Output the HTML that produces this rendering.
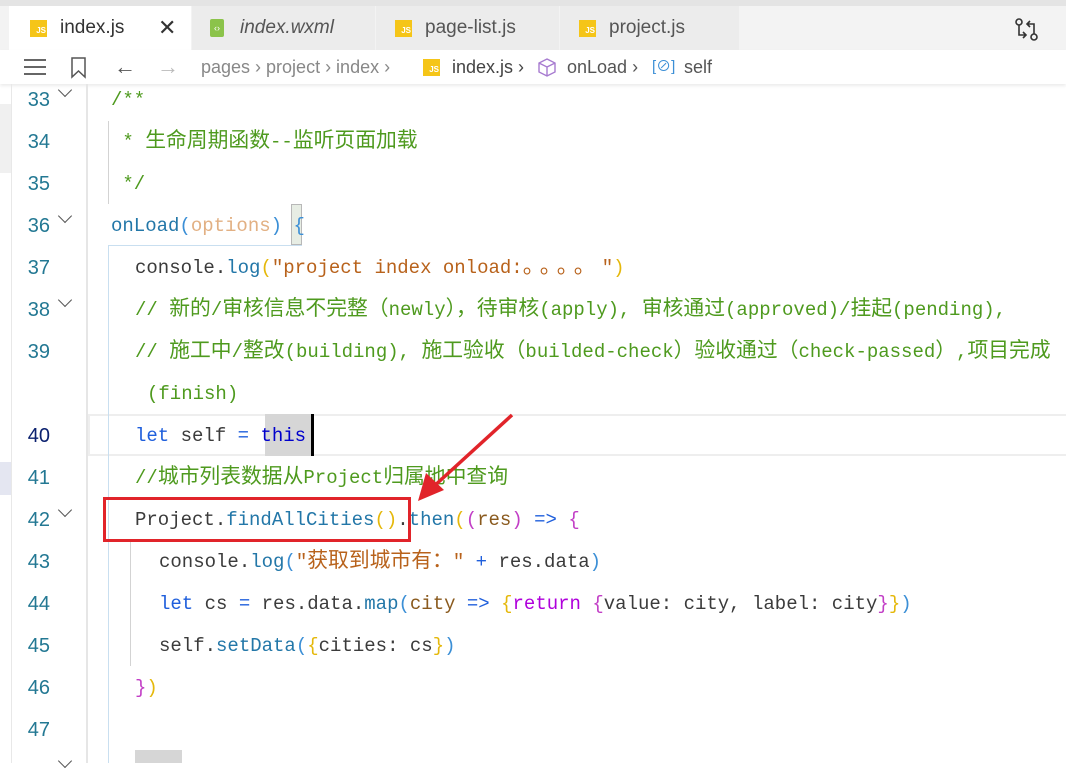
<!DOCTYPE html>
<html><head><meta charset="utf-8"><style>
*{margin:0;padding:0;box-sizing:border-box}
body{width:1066px;height:763px;overflow:hidden;background:#fff;position:relative;font-family:"Liberation Sans","Noto Sans CJK SC",sans-serif}
.abs{position:absolute}
.tab{position:absolute;top:6px;height:44px;background:#ececec;border-right:1px solid #f3f3f3;font-size:19px;color:#555;line-height:44px}
.js{position:absolute;width:17px;height:17px;background:#f5c518;color:#fff;font-size:8px;font-weight:bold;line-height:22px;text-align:right;padding-right:1px;top:14px}
.code{position:absolute;left:0;width:1066px;height:42px;line-height:42px;font-family:"Liberation Mono","Noto Sans CJK SC",monospace;font-size:19px;white-space:pre;color:#3b3b3b}
.ln{position:absolute;left:12px;width:38px;text-align:right;color:#237893;font-family:"Liberation Sans",sans-serif;font-size:20px}
.tx{position:absolute;left:111px;line-height:42px}
.l1{left:135px}.l2{left:159px}
.z{font-family:"Noto Sans CJK SC",sans-serif;font-size:20.8px;font-weight:normal;line-height:0}
.chev{position:absolute;left:60px;width:10px;height:10px;border-right:1.5px solid #555;border-bottom:1.5px solid #555;transform:rotate(45deg)}
.c{color:#4e9a1e}.s{color:#b8621b}.k{color:#1f5fdc}.f{color:#2377a8}.p{color:#e2b083}.v{color:#8a5a1e}
.b1{color:#e5b80b}.b2{color:#c23ec6}.b3{color:#3b8fd6}.op{color:#1f5fdc}
</style></head><body>
<div class="abs" style="left:0;top:0;width:1066px;height:50px;background:#f3f3f3"></div>
<div class="abs" style="left:0;top:0;width:1066px;height:6px;background:#e4e4e4"></div>
<div class="tab" style="left:9px;width:183px;background:#fff;color:#333"><span class="js" style="left:21px">JS</span><span style="position:absolute;left:51px">index.js</span><span style="position:absolute;left:149px;font-size:22px;color:#333">✕</span></div>
<div class="tab" style="left:192px;width:184px"><span class="abs" style="left:18px;top:13px;width:14px;height:18px;background:#8bc34a;border-radius:2px;color:#fff;font-size:9px;line-height:18px;text-align:center">‹›</span><span style="position:absolute;left:48px;font-style:italic">index.wxml</span></div>
<div class="tab" style="left:376px;width:184px"><span class="js" style="left:19px">JS</span><span style="position:absolute;left:49px">page-list.js</span></div>
<div class="tab" style="left:560px;width:180px"><span class="js" style="left:19px">JS</span><span style="position:absolute;left:49px">project.js</span></div>
<svg class="abs" style="left:1014px;top:17px" width="26" height="26" viewBox="0 0 26 26" fill="none" stroke="#333" stroke-width="1.6"><circle cx="5" cy="5" r="3"/><circle cx="20" cy="20" r="3"/><path d="M5 8v10h6M9 15l3 3-3 3M20 17V7h-6M16 4l-3 3 3 3"/></svg>
<div class="abs" style="left:0;top:50px;width:1066px;height:34px;background:#fff;box-shadow:0 2px 3px rgba(0,0,0,.08)"></div>
<div class="abs" style="left:0;top:50px;height:34px;line-height:34px;font-size:18px;color:#888;width:1066px">
<span class="abs" style="left:24px;top:9px;width:22px;height:16px;border-top:2px solid #666;border-bottom:2px solid #666"><span class="abs" style="left:0;top:5px;width:22px;height:2px;background:#666"></span></span>
<svg class="abs" style="left:70px;top:7px" width="18" height="22"><path d="M2 1h13v19l-6.5-6-6.5 6z" fill="none" stroke="#555" stroke-width="1.5"/></svg>
<span class="abs" style="left:114px;color:#555;font-size:22px">←</span>
<span class="abs" style="left:157px;color:#bbb;font-size:22px">→</span>
<span class="abs" style="left:201px">pages › project › index ›</span>
<span class="js" style="left:423px;top:9px">JS</span>
<span class="abs" style="left:452px;color:#444">index.js ›</span>
<svg class="abs" style="left:538px;top:8px" width="18" height="19" viewBox="0 0 18 19" fill="none" stroke="#a77bd0" stroke-width="1.4"><path d="M9 1l8 4v9l-8 4-8-4V5zM1 5l8 4 8-4M9 9v9"/></svg>
<span class="abs" style="left:567px;color:#555">onLoad ›</span>
<span class="abs" style="left:652px;color:#3c8fd6;font-size:15px">[⊘]</span>
<span class="abs" style="left:684px;color:#555">self</span>
</div>
<div class="abs" style="left:11px;top:84px;width:1px;height:679px;background:#e8e8e8"></div>
<div class="abs" style="left:0;top:104px;width:11px;height:69px;background:#f0f0f0"></div>
<div class="abs" style="left:0;top:462px;width:11px;height:33px;background:#e4e6f1"></div>
<div class="abs" style="left:86px;top:84px;width:2px;height:679px;background:#e6e6e6"></div>
<div class="abs" style="left:88px;top:414px;width:978px;height:42px;border:2px solid #eee;border-right:none"></div>
<div class="abs" style="left:108px;top:121px;width:1px;height:83px;background:#d3d3d3"></div>
<div class="abs" style="left:108px;top:245px;width:1px;height:518px;background:#c9dff0"></div>
<div class="abs" style="left:108px;top:245px;width:194px;height:1px;background:#c9dff0"></div>
<div class="abs" style="left:130px;top:542px;width:1px;height:124px;background:#d3d3d3"></div>
<div class="abs" style="left:291px;top:204px;width:11px;height:41px;background:#e7ede4;border:1px solid #b8b8b8"></div>
<div class="abs" style="left:265px;top:414px;width:47px;height:42px;background:#d6d6d6"></div>
<div class="abs" style="left:311px;top:414px;width:3px;height:42px;background:#000"></div>
<div class="abs" style="left:135px;top:750px;width:47px;height:13px;background:#d6d6d6"></div>

<div class="code" style="top:79px"><span class="ln">33</span><i class="chev" style="top:6px"></i><span class="tx c">/**</span></div>
<div class="code" style="top:121px"><span class="ln">34</span><span class="tx c"> * <b class="z">生命周期函数</b>--<b class="z">监听页面加载</b></span></div>
<div class="code" style="top:163px"><span class="ln">35</span><span class="tx c"> */</span></div>
<div class="code" style="top:205px"><span class="ln">36</span><i class="chev" style="top:6px"></i><span class="tx"><span class="f">onLoad</span><span class="b3">(</span><span class="p">options</span><span class="b3">)</span> <span class="b3">{</span></span></div>
<div class="code" style="top:247px"><span class="ln">37</span><span class="tx l1">console.<span class="f">log</span><span class="b1">(</span><span class="s">"project index onload:<span style="letter-spacing:6px;font-size:22px">。。。。</span>"</span><span class="b1">)</span></span></div>
<div class="code" style="top:289px"><span class="ln">38</span><i class="chev" style="top:6px"></i><span class="tx l1 c">// <b class="z">新的</b>/<b class="z">审核信息不完整（</b>newly<b class="z">），待审核</b>(apply), <b class="z">审核通过</b>(approved)/<b class="z">挂起</b>(pending),</span></div>
<div class="code" style="top:331px"><span class="ln">39</span><span class="tx l1 c">// <b class="z">施工中</b>/<b class="z">整改</b>(building), <b class="z">施工验收（</b>builded-check<b class="z">）验收通过（</b>check-passed<b class="z">）</b>,<b class="z">项目完成</b></span></div>
<div class="code" style="top:373px"><span class="tx c" style="left:147px">(finish)</span></div>
<div class="code" style="top:415px"><span class="ln" style="color:#0b216f">40</span><span class="tx l1"><span class="k">let</span> self <span class="op">=</span> <span class="k" style="color:#0000cc">this</span></span></div>
<div class="code" style="top:457px"><span class="ln">41</span><span class="tx l1 c">//<b class="z">城市列表数据从</b>Project<b class="z">归属地中查询</b></span></div>
<div class="code" style="top:499px"><span class="ln">42</span><i class="chev" style="top:6px"></i><span class="tx l1">Project.<span class="f">findAllCities</span><span class="b1">()</span>.<span class="f">then</span><span class="b1">(</span><span class="b2">(</span><span class="v">res</span><span class="b2">)</span> <span class="op">=&gt;</span> <span class="b2">{</span></span></div>
<div class="code" style="top:541px"><span class="ln">43</span><span class="tx l2">console.<span class="f">log</span><span class="b3">(</span><span class="s">"<b class="z">获取到城市有：</b>"</span> <span class="op">+</span> res.data<span class="b3">)</span></span></div>
<div class="code" style="top:583px"><span class="ln">44</span><span class="tx l2"><span class="k">let</span> cs <span class="op">=</span> res.data.<span class="f">map</span><span class="b3">(</span><span class="v">city</span> <span class="op">=&gt;</span> <span class="b1">{</span><span class="k" style="color:#af00db">return</span> <span class="b2">{</span>value: city, label: city<span class="b2">}</span><span class="b1">}</span><span class="b3">)</span></span></div>
<div class="code" style="top:625px"><span class="ln">45</span><span class="tx l2">self.<span class="f">setData</span><span class="b3">(</span><span class="b1">{</span>cities: cs<span class="b1">}</span><span class="b3">)</span></span></div>
<div class="code" style="top:667px"><span class="ln">46</span><span class="tx l1"><span class="b2">}</span><span class="b1">)</span></span></div>
<div class="code" style="top:709px"><span class="ln">47</span></div>
<i class="chev" style="top:756px"></i>

<div class="abs" style="left:103px;top:497px;width:308px;height:45px;border:3px solid #e1242a"></div>
<svg class="abs" style="left:0;top:0" width="1066" height="763"><line x1="512" y1="415" x2="432" y2="488" stroke="#e1242a" stroke-width="3.5"/><path d="M418 501l8-28 18 17z" fill="#e1242a"/></svg>
</body></html>
